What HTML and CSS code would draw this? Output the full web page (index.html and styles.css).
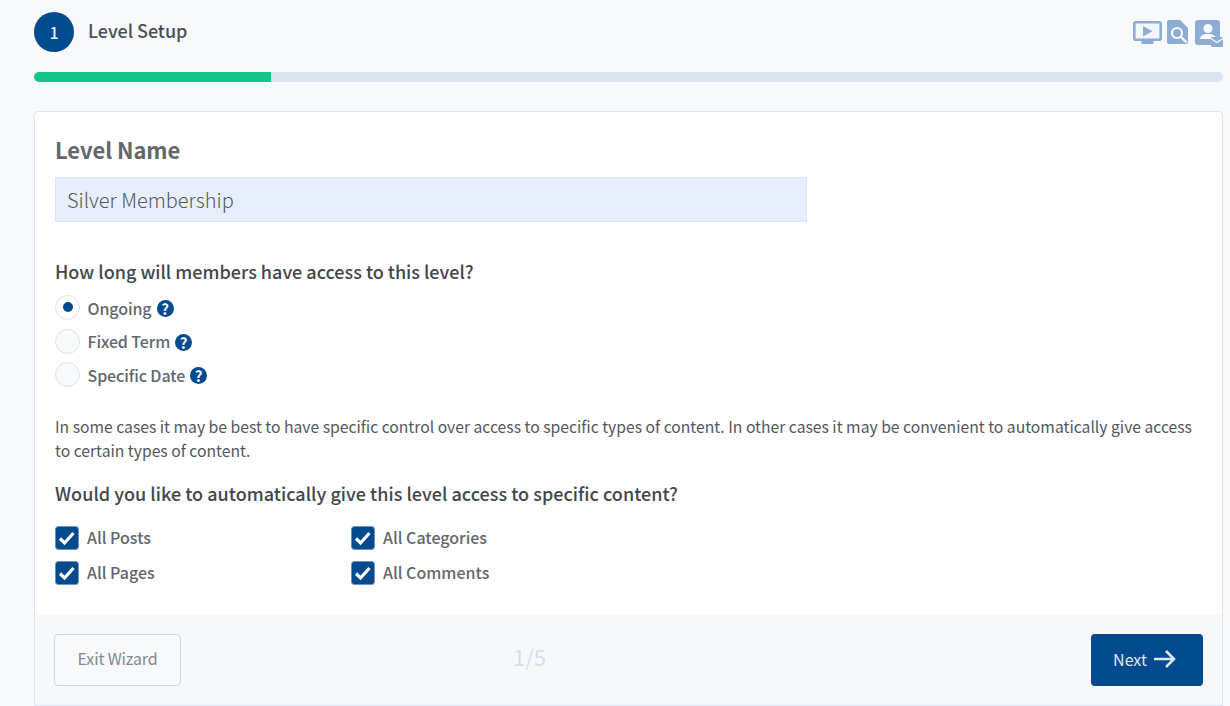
FILE: index.html
```html
<!DOCTYPE html>
<html lang="en">
<head>
<meta charset="utf-8">
<title>Level Setup</title>
<link rel="stylesheet" href="styles.css">
</head>
<body>
<div class="page">
  <header class="top">
    <span class="step-num">1</span>
    <span class="step-title">Level Setup</span>
    <div class="tools">
      <svg class="tool-video" width="29" height="24" viewBox="0 0 29 24"><rect x="1.300" y="1.300" width="26.400" height="17.400" rx="1.500" fill="#f2f5fa" stroke="#8fadd3" stroke-width="2.600"/><path d="M10 5l0 10.500 9.500-5.200z" fill="#8fadd3"/><rect x="8.500" y="19" width="12" height="4" fill="#8fadd3"/></svg>
      <svg class="tool-search" width="21" height="24" viewBox="0 0 21 24"><path d="M2 0h11l8 8v14a2 2 0 0 1-2 2H2a2 2 0 0 1-2-2V2a2 2 0 0 1 2-2z" fill="#8fadd3"/><circle cx="10" cy="13" r="5" fill="none" stroke="#f7f9fc" stroke-width="2.200"/><path d="M13.500 16.500l6 6" stroke="#f7f9fc" stroke-width="2.400"/></svg>
      <svg class="tool-user" width="28" height="27" viewBox="0 0 28 27"><rect x="0" y="0" width="25" height="25" rx="3" fill="#8fadd3"/><circle cx="13" cy="8.500" r="4.500" fill="#f7f9fc"/><path d="M5 19c0-4 4-5 8-5s8 1 8 5z" fill="#f7f9fc"/><rect x="16" y="17" width="12" height="10" rx="1" fill="#8fadd3"/><path d="M16 18.500l6 4 6-4" fill="none" stroke="#f7f9fc" stroke-width="1.200"/></svg>
    </div>
  </header>
  <div class="progress"><div class="progress-fill" style="width:19.930%"></div></div>
  <main class="card">
    <div class="card-body">
      <h2 class="name-label">Level Name</h2>
      <div class="name-input">Silver Membership</div>
      <h3 class="question q-access">How long will members have access to this level?</h3>
      <ul class="radios">
        <li class="radio-row"><span class="radio on"></span><span class="opt">Ongoing</span><span class="help">?</span></li>
        <li class="radio-row"><span class="radio"></span><span class="opt">Fixed Term</span><span class="help">?</span></li>
        <li class="radio-row"><span class="radio"></span><span class="opt">Specific Date</span><span class="help">?</span></li>
      </ul>
      <p class="desc">In some cases it may be best to have specific control over access to specific types of content. In other cases it may be convenient to automatically give access to certain types of content.</p>
      <h3 class="question q-auto">Would you like to automatically give this level access to specific content?</h3>
      <div class="checks">
        <label class="check"><svg class="box" width="24" height="24" viewBox="0 0 24 24"><rect x="0.500" y="0.500" width="23" height="23" rx="3" fill="#034a8f" stroke="#6f90b8"/><path d="M5 12.500l4.500 4.500 9-10" fill="none" stroke="#fff" stroke-width="3.200"/></svg><span class="opt">All Posts</span></label>
        <label class="check"><svg class="box" width="24" height="24" viewBox="0 0 24 24"><rect x="0.500" y="0.500" width="23" height="23" rx="3" fill="#034a8f" stroke="#6f90b8"/><path d="M5 12.500l4.500 4.500 9-10" fill="none" stroke="#fff" stroke-width="3.200"/></svg><span class="opt">All Categories</span></label>
        <label class="check"><svg class="box" width="24" height="24" viewBox="0 0 24 24"><rect x="0.500" y="0.500" width="23" height="23" rx="3" fill="#034a8f" stroke="#6f90b8"/><path d="M5 12.500l4.500 4.500 9-10" fill="none" stroke="#fff" stroke-width="3.200"/></svg><span class="opt">All Pages</span></label>
        <label class="check"><svg class="box" width="24" height="24" viewBox="0 0 24 24"><rect x="0.500" y="0.500" width="23" height="23" rx="3" fill="#034a8f" stroke="#6f90b8"/><path d="M5 12.500l4.500 4.500 9-10" fill="none" stroke="#fff" stroke-width="3.200"/></svg><span class="opt">All Comments</span></label>
      </div>
    </div>
    <footer class="card-foot">
      <button class="btn-exit" type="button">Exit Wizard</button>
      <span class="pager">1/5</span>
      <button class="btn-next" type="button">Next<svg width="24" height="20" viewBox="0 0 24 20"><path d="M1 10h20M13 2l8 8-8 8" fill="none" stroke="#dce5f0" stroke-width="2.600"/></svg></button>
    </footer>
  </main>
</div>
</body>
</html>
```
FILE: styles.css
```css
* { box-sizing: border-box; }
html, body { margin: 0; padding: 0; height: 100%; overflow: hidden; }
body {
  background: #f7f9fc;
  font-family: "Noto Sans CJK SC", "Noto Sans", sans-serif;
  color: #43464b;
}
.page { padding: 12px 7px 0 34px; }
.top { display: flex; align-items: center; height: 40px; }
.step-num {
  width: 40px; height: 40px; border-radius: 50%;
  background: #034a8f; color: #eef3f9;
  display: flex; align-items: center; justify-content: center;
  font-size: 16px; font-weight: 500;
}
.step-title { margin-left: 14px; font-size: 18px; font-weight: 500; color: #4c4f54; line-height: 40px; position: relative; top: -2px; letter-spacing: -0.05px; }
.tools { margin-left: auto; display: flex; align-items: flex-start; height: 40px; padding-top: 8px; }
.tool-video { margin-top: 1px; margin-right: 5px; }
.tool-search { margin-right: 7px; }
.progress { margin-top: 20px; height: 10px; border-radius: 5px; background: #dce4ef; overflow: hidden; }
.progress-fill { height: 100%; background: #15c587; }
.card {
  margin-top: 29px; height: 595px;
  background: #fff; border: 1px solid #dde5f0; border-radius: 4px 4px 0 0;
  display: flex; flex-direction: column;
}
.card-body { flex: 1; padding: 22px 20px 0; }
.name-label { margin: 0; font-size: 22px; line-height: 30px; font-weight: 600; color: #63666b; letter-spacing: -0.05px; }
.name-input {
  margin-top: 13px; width: 752px; height: 45px;
  background: #e6effb; border: 1px solid #dce5f1;
  padding: 0 11px; line-height: 43px;
  font-size: 20px; font-weight: 300; color: #54575c;
}
.question { margin: 0; font-size: 18px; font-weight: 500; line-height: 26px; color: #43464b; }
.q-access { margin-top: 36px; }
.radios { list-style: none; margin: 7px 0 0; padding: 0; }
.radio-row { display: flex; align-items: center; height: 33.500px; }
.radio {
  width: 25px; height: 25px; border-radius: 50%;
  background: #f7f9fc; border: 1px solid #dde3ec;
  margin-right: 7.500px; flex: none; position: relative;
}
.radio.on { background: #fff; }
.radio.on::after {
  content: ""; position: absolute; left: 7px; top: 6px;
  width: 10px; height: 10px; border-radius: 50%; background: #034a8f;
}
.opt { font-size: 16px; font-weight: 500; color: #63666b; letter-spacing: -0.1px; }
.check .opt { position: relative; top: -1px; letter-spacing: 0; }
.help {
  margin-left: 5px; width: 17px; height: 17px; border-radius: 50%;
  background: #034a8f; color: #fff; font-size: 15px; font-weight: 700;
  display: flex; align-items: center; justify-content: center; line-height: 17px;
  position: relative; top: 1px;
}
.desc { margin: 23px 0 0; width: 1146px; font-size: 15.700px; line-height: 24px; color: #54575c; font-weight: 400; }
.q-auto { margin-top: 17px; letter-spacing: 0.03px; }
.checks { display: grid; grid-template-columns: 296px 1fr; row-gap: 11px; margin-top: 20px; }
.check { display: flex; align-items: center; height: 24px; gap: 8px; }
.box { flex: none; }
.card-foot {
  height: 90px; background: #f6f8fa; flex: none;
  display: flex; align-items: flex-start; position: relative;
  padding: 19px 19px 0;
}
.btn-exit {
  width: 127px; height: 52px; background: #f7f9fb;
  border: 1px solid #d3d6da; border-radius: 4px;
  font: 400 16px "Noto Sans CJK SC", sans-serif; color: #85888d; padding: 0 0 5px; letter-spacing: -0.15px;
}
.pager { margin-left: 332px; font-size: 22px; line-height: 45px; color: #d5e0ee; }
.btn-next {
  margin-left: auto; width: 112px; height: 52px; background: #034a8f;
  border: 0; border-radius: 4px; color: #dce5f0;
  font: 400 16px "Noto Sans CJK SC", sans-serif;
  display: flex; align-items: center; justify-content: center; gap: 6px; padding: 0 4px 2px 0;
}
```
